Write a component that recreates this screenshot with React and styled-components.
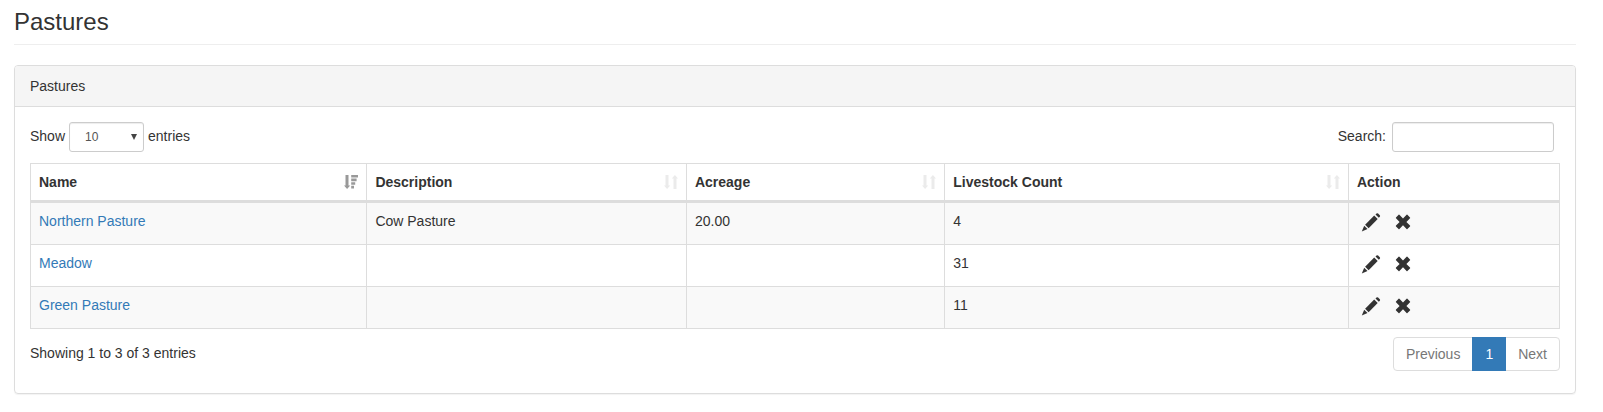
import React from "react";
import styled, { createGlobalStyle } from "styled-components";

const GlobalStyle = createGlobalStyle`
  * {
    box-sizing: border-box;
  }

  body {
    margin: 0;
    background: #fff;
    color: #333;
    font-family: "Liberation Sans", Arial, sans-serif;
    font-size: 14px;
    line-height: 20px;
  }

  button, input, select {
    font-family: inherit;
  }
`;

const Page = styled.main`
  padding: 8px 27px 18px 14px;
`;

const PageHeader = styled.h1`
  margin: 0 0 20px;
  padding-bottom: 8px;
  border-bottom: 1px solid #eee;
  font-size: 24px;
  font-weight: normal;
  line-height: 28px;
`;

const Panel = styled.section`
  border: 1px solid #ddd;
  border-radius: 4px;
  box-shadow: 0 1px 1px rgba(0, 0, 0, 0.05);
`;

const PanelHeading = styled.div`
  padding: 10px 15px;
  border-bottom: 1px solid #ddd;
  border-radius: 3px 3px 0 0;
  background: #f5f5f5;
`;

const PanelBody = styled.div`
  padding: 15px 15px 22px;
`;

const Toolbar = styled.div`
  display: flex;
  justify-content: space-between;
  align-items: center;
  margin-bottom: 11px;
`;

const LengthLabel = styled.label`
  display: flex;
  align-items: flex-start;
  gap: 4px;
  line-height: 28px;
`;

const SearchLabel = styled.label`
  display: flex;
  align-items: flex-start;
  gap: 6px;
  padding-right: 6px;
  line-height: 28px;
`;

const SelectBox = styled.span`
  display: grid;
  align-items: center;
  width: 75px;

  > * {
    grid-area: 1 / 1;
  }

  svg {
    justify-self: end;
    margin-right: 7px;
    pointer-events: none;
  }
`;

const Select = styled.select`
  appearance: none;
  width: 100%;
  height: 30px;
  padding: 0 15px;
  border: 1px solid #ccc;
  border-radius: 3px;
  background: #fff;
  box-shadow: inset 0 1px 1px rgba(0, 0, 0, 0.075);
  color: #555;
  font-size: 12px;
`;

const SearchInput = styled.input`
  width: 162px;
  height: 30px;
  padding: 5px 10px;
  border: 1px solid #ccc;
  border-radius: 3px;
  background: #fff;
  box-shadow: inset 0 1px 1px rgba(0, 0, 0, 0.075);
  color: #555;
  font-size: 12px;
`;

const Table = styled.table`
  width: 100%;
  table-layout: fixed;
  border-collapse: separate;
  border-spacing: 0;
  border: solid #ddd;
  border-width: 1px 0 0 1px;
`;

const Th = styled.th`
  width: ${props => props.$width};
  padding: 8px;
  border: solid #ddd;
  border-width: 0 1px 3px 0;
  text-align: left;
`;

const ThContent = styled.div`
  display: flex;
  justify-content: space-between;
  align-items: center;
`;

const Tr = styled.tr`
  &:nth-child(odd) {
    background: #f9f9f9;
  }
`;

const Td = styled.td`
  height: 42px;
  padding: 8px;
  border: solid #ddd;
  border-width: 0 1px 1px 0;
  vertical-align: top;
`;

const Link = styled.a`
  color: #337ab7;
  text-decoration: none;

  &:hover {
    text-decoration: underline;
  }
`;

const Actions = styled.div`
  display: flex;
  gap: 4px;
`;

const IconButton = styled.button`
  display: flex;
  padding: 1px 4px 4px;
  border: none;
  background: transparent;
  color: #333;
  cursor: pointer;
`;

const Footer = styled.div`
  display: flex;
  justify-content: space-between;
  align-items: flex-start;
  margin-top: 8px;
`;

const Info = styled.div`
  padding-top: 6px;
`;

const Pagination = styled.nav`
  display: flex;
`;

const PageButton = styled.button`
  height: 34px;
  margin-left: -1px;
  padding: 6px 12px;
  border: 1px solid ${props => props.$active ? "#337ab7" : "#ddd"};
  background: ${props => props.$active ? "#337ab7" : "#fff"};
  color: ${props => props.$active ? "#fff" : "#777"};
  font-size: 14px;
  line-height: 20px;
  z-index: ${props => props.$active ? 1 : 0};

  &:first-child {
    margin-left: 0;
    border-radius: 4px 0 0 4px;
  }

  &:last-child {
    border-radius: 0 4px 4px 0;
  }
`;

const ArrowIcon = () => (
  <svg width="6" height="6" viewBox="0 0 6 6" aria-hidden="true">
    <path d="M0 0h6L3 6z" fill="#444" />
  </svg>
);

const SortIcon = () => (
  <svg width="14" height="14" viewBox="0 0 14 14" fill="#ebebeb" aria-hidden="true">
    <path d="M1.5 0h3v10.4h1.7L3.1 14 0 10.400h1.500z" />
    <path d="M9.500 14h3V3.600H14L10.900 0 7.800 3.600h1.700z" />
  </svg>
);

const SortAscIcon = () => (
  <svg width="14" height="14" viewBox="0 0 14 14" fill="#999" aria-hidden="true">
    <path d="M1.500 0h3v10.400h1.700L3.100 14 0 10.400h1.500z" />
    <path d="M7.200 0H14v2.600H7.200zM7.200 3.600h5.400v2.600H7.200zM7.200 7.200h4v2.600h-4zM7.200 10.800H10v2.600H7.200z" />
  </svg>
);

const PencilIcon = () => (
  <svg width="20" height="20" viewBox="0 0 20 20" fill="currentColor" aria-hidden="true">
    <path d="M14.500 2.500l1-1q.8-.7 1.600 0l1.700 1.700q.7.8 0 1.600l-1 1z" />
    <path d="M13.200 3.600l3.500 3.500L7.600 16.200l-3.500-3.500z" />
    <path d="M3.200 13.800l3.300 3.300L.8 19.500z" />
  </svg>
);

const RemoveIcon = () => (
  <svg width="20" height="20" viewBox="0 0 20 20" fill="currentColor" aria-hidden="true">
    <path d="M5.6 2.800q.4-.4.8 0L10 6.500l3.600-3.700q.4-.4.8 0l2.600 2.600q.4.4 0 .8L13.400 9.900l3.600 3.700q.4.4 0 .8L14.400 17q-.4.4-.8 0L10 13.300 6.400 17q-.4.4-.8 0L3 14.400q-.4-.4 0-.8l3.600-3.700L3 6.200q-.4-.4 0-.8z" />
  </svg>
);

const columns = [
  { title: "Name", width: "22%", icon: <SortAscIcon />, sort: "ascending" },
  { title: "Description", width: "20.9%", icon: <SortIcon /> },
  { title: "Acreage", width: "16.9%", icon: <SortIcon /> },
  { title: "Livestock Count", width: "26.4%", icon: <SortIcon /> },
  { title: "Action", width: "13.8%" },
];

const pastures = [
  { name: "Northern Pasture", description: "Cow Pasture", acreage: "20.00", count: 4 },
  { name: "Meadow", description: "", acreage: "", count: 31 },
  { name: "Green Pasture", description: "", acreage: "", count: 11 },
];

const PastureRow = ({ pasture }) => (
  <Tr>
    <Td><Link href="#">{pasture.name}</Link></Td>
    <Td>{pasture.description}</Td>
    <Td>{pasture.acreage}</Td>
    <Td>{pasture.count}</Td>
    <Td>
      <Actions>
        <IconButton type="button" aria-label={`Edit ${pasture.name}`}><PencilIcon /></IconButton>
        <IconButton type="button" aria-label={`Delete ${pasture.name}`}><RemoveIcon /></IconButton>
      </Actions>
    </Td>
  </Tr>
);

export default function App() {
  const [search, setSearch] = React.useState("");

  const rows = pastures.filter(p => p.name.toLowerCase().includes(search.toLowerCase()));

  return (
    <>
      <GlobalStyle />
      <Page>
        <PageHeader>Pastures</PageHeader>
        <Panel>
          <PanelHeading>Pastures</PanelHeading>
          <PanelBody>
            <Toolbar>
              <LengthLabel htmlFor="length">
                Show
                <SelectBox>
                  <Select id="length" defaultValue="10">
                    <option>10</option>
                    <option>25</option>
                    <option>50</option>
                    <option>100</option>
                  </Select>
                  <ArrowIcon />
                </SelectBox>
                entries
              </LengthLabel>
              <SearchLabel htmlFor="search">
                Search:
                <SearchInput id="search" type="search" value={search} onChange={e => setSearch(e.target.value)} />
              </SearchLabel>
            </Toolbar>
            <Table>
              <thead>
                <tr>
                  {columns.map(col => (
                    <Th key={col.title} $width={col.width} aria-sort={col.sort}>
                      <ThContent>{col.title}{col.icon}</ThContent>
                    </Th>
                  ))}
                </tr>
              </thead>
              <tbody>
                {rows.map(p => <PastureRow key={p.name} pasture={p} />)}
              </tbody>
            </Table>
            <Footer>
              <Info>{`Showing ${rows.length ? 1 : 0} to ${rows.length} of ${rows.length} entries`}</Info>
              <Pagination aria-label="Pages">
                <PageButton type="button">Previous</PageButton>
                <PageButton type="button" $active aria-current="page">1</PageButton>
                <PageButton type="button">Next</PageButton>
              </Pagination>
            </Footer>
          </PanelBody>
        </Panel>
      </Page>
    </>
  );
}
